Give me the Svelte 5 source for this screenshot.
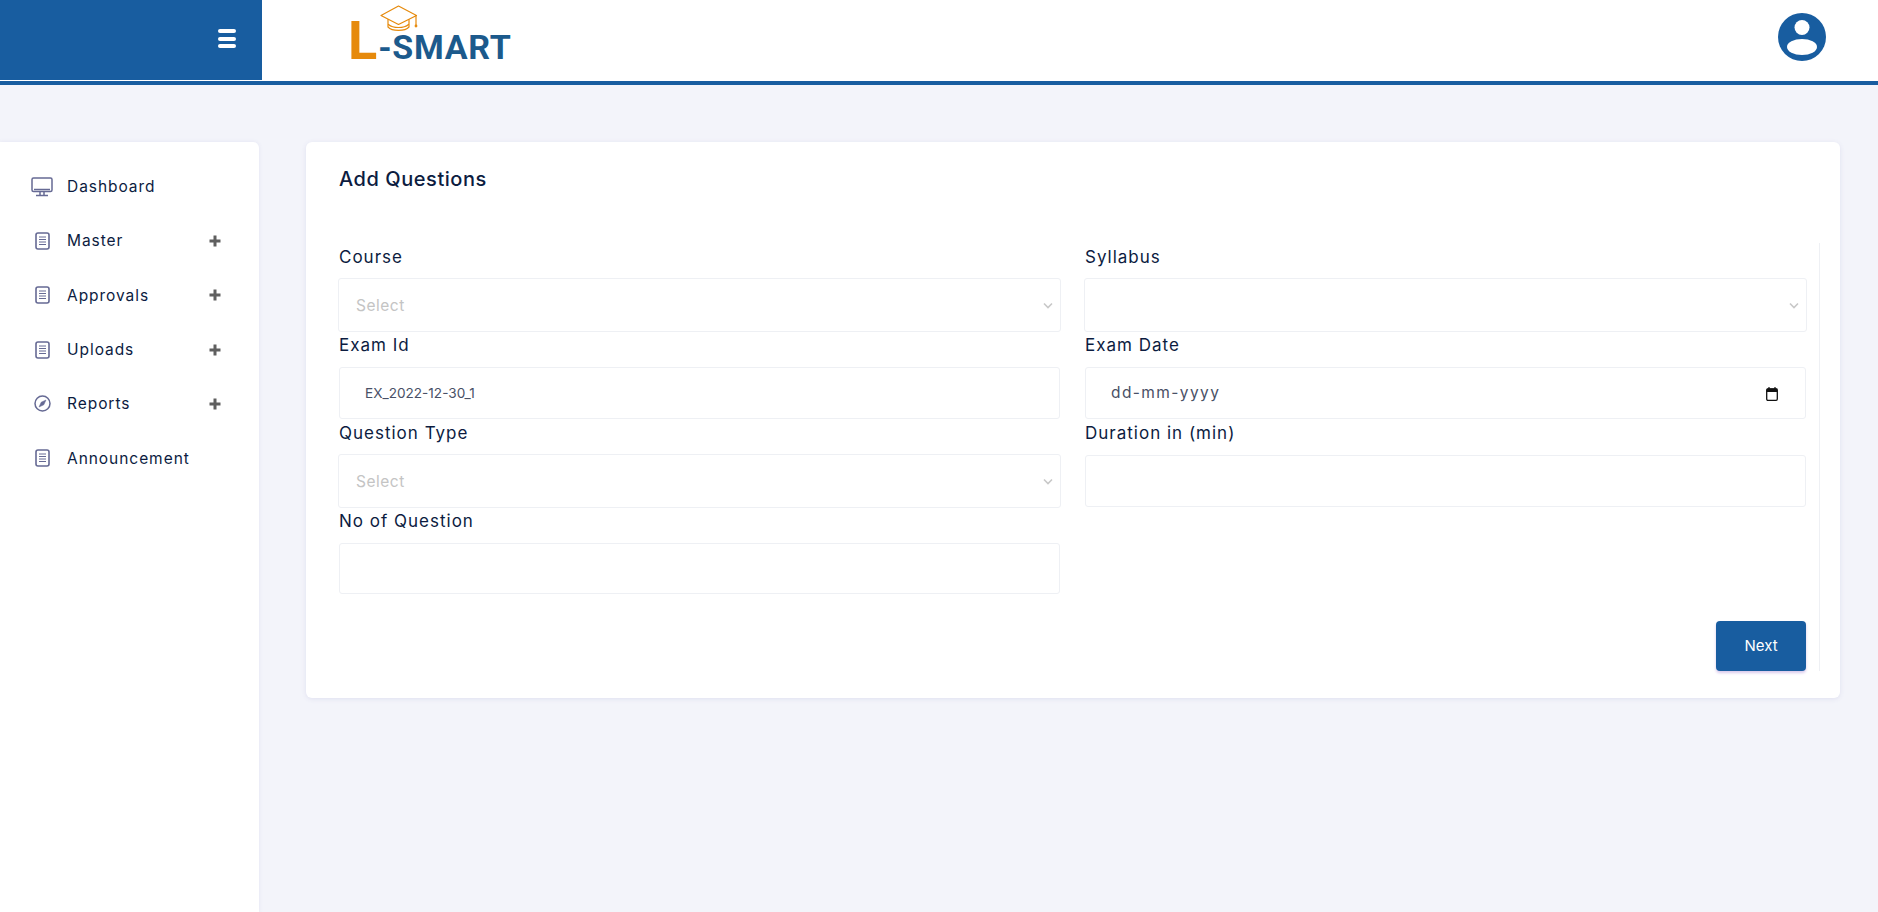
<script lang="ts">
    const menu = [
        { name: "Dashboard", icon: "monitor", more: false },
        { name: "Master", icon: "doc", more: true },
        { name: "Approvals", icon: "doc", more: true },
        { name: "Uploads", icon: "doc", more: true },
        { name: "Reports", icon: "compass", more: true },
        { name: "Announcement", icon: "doc", more: false }
    ];

    const fields = [
        { label: "Course", kind: "select", placeholder: "Select" },
        { label: "Syllabus", kind: "select", placeholder: "" },
        { label: "Exam Id", kind: "input", value: "EX_2022-12-30_1" },
        { label: "Exam Date", kind: "date", value: "dd-mm-yyyy" },
        { label: "Question Type", kind: "select", placeholder: "Select" },
        { label: "Duration in (min)", kind: "input", value: "" },
        { label: "No of Question", kind: "input", value: "" }
    ];
</script>

<header class="topbar">
    <div class="brand">
        <button class="burger" aria-label="Toggle menu"><span></span><span></span><span></span></button>
    </div>
    <div class="logo">
        <span class="logo-l">L</span><span class="logo-rest">-SMART</span>
        <svg class="cap" viewBox="0 0 38 28" fill="none" stroke="#e68a0c" stroke-width="1.2" stroke-linejoin="round" stroke-linecap="round">
            <path d="M18.5 1 L36.5 10.5 L18.5 19.5 L1 10.5 Z" />
            <path d="M8 14.5 V22 C12 26.5 25 26.5 29 22 V14.5" />
            <path d="M8.5 19.5 C13 23.5 24 23.5 28.500 19.5" />
            <path d="M36 11 V20" />
            <circle cx="36" cy="21" r="0.8" />
        </svg>
    </div>
    <svg class="avatar" viewBox="0 0 48 48">
        <circle cx="24" cy="24" r="24" fill="#185da0" />
        <circle cx="24" cy="14.500" r="7.500" fill="#fff" />
        <ellipse cx="24" cy="34" rx="15" ry="8" fill="#fff" />
    </svg>
</header>

<div class="page">
    <nav class="sidebar">
        {#each menu as item}
            <a class="nav-item" href="#top">
                <span class="nav-icon">
                    {#if item.icon === "monitor"}
                        <svg width="22" height="20" viewBox="0 0 22 20" fill="none" stroke="#666a94" stroke-width="1.500">
                            <rect x="1" y="1" width="20" height="13.500" rx="1.500" />
                            <path d="M3 12.500 H19" />
                            <path d="M9 15 V18 M13 15 V18" />
                            <path d="M5 18.500 H17" stroke-width="1.500" />
                        </svg>
                    {:else if item.icon === "doc"}
                        <svg width="15" height="18" viewBox="0 0 15 18" fill="none" stroke="#666a94" stroke-width="1.600">
                            <rect x="1" y="1" width="13" height="16" rx="2" />
                            <path d="M4 5 H11 M4 7.500 H11 M4 10 H11 M4 12.500 H11" stroke-width="1" />
                        </svg>
                    {:else}
                        <svg width="17" height="17" viewBox="0 0 17 17" fill="none" stroke="#666a94" stroke-width="1.500">
                            <circle cx="8.500" cy="8.500" r="7.500" />
                            <path d="M12 5 L9.800 9.800 L5 12 L7.200 7.200 Z" fill="#666a94" stroke-width="0.500" />
                        </svg>
                    {/if}
                </span>
                <span class="nav-text">{item.name}</span>
                {#if item.more}
                    <svg class="plus" width="12" height="12" viewBox="0 0 12 12">
                        <path d="M6 0.500 V11.500 M0.500 6 H11.500" stroke="#5f5f5f" stroke-width="3" />
                    </svg>
                {/if}
            </a>
        {/each}
    </nav>

    <main class="card">
        <h1>Add Questions</h1>
        <div class="form-wrap">
            <div class="form-grid">
                {#each fields as f}
                    <div class="field">
                        <label for={f.label}>{f.label}</label>
                        {#if f.kind === "select"}
                            <div class="select-box">
                                <select id={f.label}>
                                    <option>{f.placeholder}</option>
                                </select>
                                <svg class="chevron" width="10" height="7" viewBox="0 0 10 7" fill="none">
                                    <path d="M1 1.500 L5 5.500 L9 1.500" stroke="#c8c8c8" stroke-width="1.600" />
                                </svg>
                            </div>
                        {:else if f.kind === "date"}
                            <div class="date-box">
                                <input id={f.label} class="control date" type="text" value={f.value} />
                                <svg class="calendar" width="12" height="14" viewBox="0 0 12 14" fill="none">
                                    <rect x="0.700" y="2" width="10.600" height="11.300" rx="1.200" stroke="#111" stroke-width="1.300" />
                                    <rect x="0.700" y="1.500" width="10.600" height="3.500" fill="#111" />
                                    <path d="M3 0 V2 M9 0 V2" stroke="#111" stroke-width="1.200" />
                                </svg>
                            </div>
                        {:else}
                            <input id={f.label} class="control" type="text" value={f.value} />
                        {/if}
                    </div>
                {/each}
            </div>
            <div class="actions">
                <button class="next">Next</button>
            </div>
        </div>
    </main>
</div>

<style>
    :global(body) {
        background: #f3f4fa;
        font-family: Inter, "Liberation Sans", sans-serif;
        color: #0c1c3f;
        height: 912px;
        overflow: hidden;
    }

    .topbar {
        height: 81px;
        background: #fff;
        border-bottom: 4px solid #185da0;
        display: flex;
        align-items: flex-start;
    }

    .brand {
        width: 262px;
        height: 80px;
        background: #185da0;
        display: flex;
        justify-content: flex-end;
        align-items: center;
        padding-right: 26px;
        box-sizing: border-box;
    }

    .burger {
        width: 18px;
        background: none;
        border: none;
        padding: 0;
        display: flex;
        flex-direction: column;
        gap: 3.500px;
        margin-top: -3px;
    }

    .burger span {
        display: block;
        height: 4px;
        background: #fff;
        border-radius: 2px;
    }

    .logo {
        position: relative;
        margin-left: 86px;
        width: 170px;
        height: 80px;
        display: flex;
        align-items: baseline;
        line-height: 1;
        padding-top: 14px;
        box-sizing: border-box;
        white-space: nowrap;
        font-family: Roboto, Inter, sans-serif;
    }

    .logo-l {
        font-size: 54px;
        font-weight: 700;
        color: #e68a0c;
    }

    .logo-rest {
        font-size: 34px;
        font-weight: 700;
        color: #1c5a8c;
        letter-spacing: 0.700px;
        margin-left: 1px;
    }

    .cap {
        position: absolute;
        left: 32px;
        top: 5px;
        width: 38px;
        height: 28px;
    }

    .avatar {
        width: 48px;
        height: 48px;
        margin: 13px 52px 0 auto;
    }

    .page {
        display: flex;
        align-items: flex-start;
        padding-top: 57px;
    }

    .sidebar {
        width: 259px;
        height: 770px;
        flex: none;
        background: #fff;
        border-radius: 0 6px 0 0;
        box-shadow: 0 0 4px #e3e4f2;
        padding-top: 17.500px;
        box-sizing: border-box;
    }

    .nav-item {
        display: flex;
        align-items: center;
        height: 54.300px;
        color: inherit;
        text-decoration: none;
        position: relative;
    }

    .nav-icon {
        width: 22px;
        margin-left: 31px;
        margin-right: 14px;
        display: flex;
        justify-content: center;
    }

    .nav-text {
        font-size: 15.500px;
        letter-spacing: 0.950px;
    }

    .plus {
        margin-left: auto;
        margin-right: 38px;
    }

    .card {
        width: 1534px;
        height: 556px;
        margin-left: 47px;
        background: #fff;
        border-radius: 6px;
        box-shadow: 0 1px 5px #dfe0f0;
        padding: 0 20px 0 32px;
        box-sizing: border-box;
    }

    h1 {
        margin: 0;
        height: 101px;
        padding: 24px 0 0 1px;
        box-sizing: border-box;
        font-size: 20px;
        line-height: 26px;
        font-weight: 500;
        letter-spacing: 0.550px;
    }

    .form-wrap {
        border-right: 1px solid #eef0f4;
        padding-right: 12px;
        height: 428px;
        box-sizing: border-box;
        padding-top: 1px;
    }

    .form-grid {
        display: grid;
        grid-template-columns: 1fr 1fr;
        column-gap: 23px;
    }

    .field label {
        display: block;
        height: 34px;
        padding-left: 1px;
        font-size: 17px;
        line-height: 27px;
        letter-spacing: 1px;
    }

    .control {
        display: block;
        width: calc(100% - 2px);
        height: 52px;
        margin: 1px;
        border: 1px solid #eef0f4;
        border-radius: 3px;
        padding: 0 26px 0 25px;
        box-sizing: border-box;
        font: 13.600px Inter, "Liberation Sans", sans-serif;
        color: #495066;
        background: #fff;
        outline: none;
    }

    .field:last-child .control {
        height: 51px;
        margin-bottom: 2px;
    }

    .control.date {
        font-size: 15.500px;
        letter-spacing: 1.400px;
        padding-bottom: 2px;
    }

    .select-box, .date-box {
        position: relative;
    }

    .select-box select {
        display: block;
        width: 100%;
        height: 54px;
        border: 1px solid #eef0f4;
        border-radius: 3px;
        padding: 0 0 0 17px;
        box-sizing: border-box;
        appearance: none;
        background: #fff;
        font: 15.500px Inter, "Liberation Sans", sans-serif;
        letter-spacing: 0.500px;
        color: #c4c4c4;
        outline: none;
    }

    .chevron {
        position: absolute;
        right: 8px;
        top: 24px;
    }

    .calendar {
        position: absolute;
        right: 29px;
        top: 20px;
    }

    .actions {
        display: flex;
        justify-content: flex-end;
        margin-top: 25px;
        padding-right: 1px;
    }

    .next {
        width: 90px;
        height: 50px;
        padding-bottom: 3px;
        background: #185da0;
        color: #fff;
        border: none;
        border-radius: 4px;
        font: 15px Inter, "Liberation Sans", sans-serif;
        box-shadow: 0 2px 3px #d9c9ec;
    }
</style>
